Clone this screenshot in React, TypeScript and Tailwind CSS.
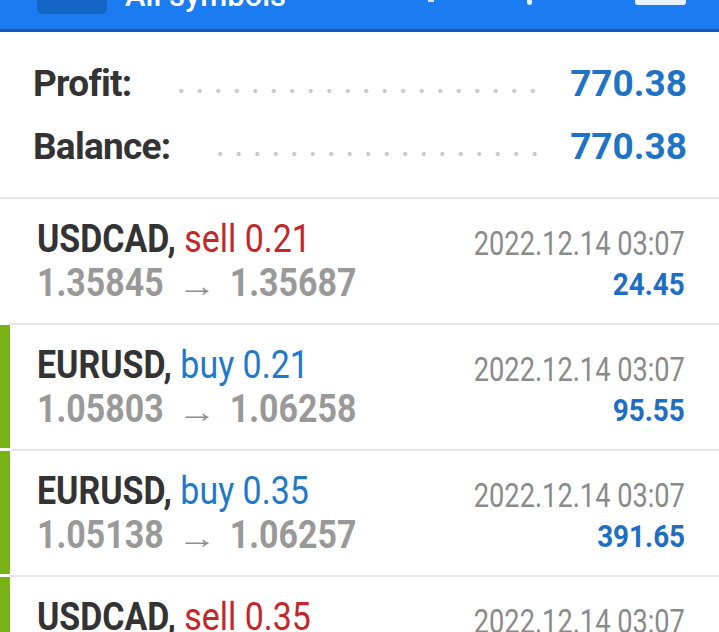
import React from 'react';

interface Deal {
  symbol: string;
  side: 'buy' | 'sell';
  lots: string;
  open: string;
  close: string;
  time: string;
  profit: string;
}

const deals: Deal[] = [
  { symbol: 'USDCAD', side: 'sell', lots: '0.21', open: '1.35845', close: '1.35687', time: '2022.12.14 03:07', profit: '24.45' },
  { symbol: 'EURUSD', side: 'buy', lots: '0.21', open: '1.05803', close: '1.06258', time: '2022.12.14 03:07', profit: '95.55' },
  { symbol: 'EURUSD', side: 'buy', lots: '0.35', open: '1.05138', close: '1.06257', time: '2022.12.14 03:07', profit: '391.65' },
  { symbol: 'USDCAD', side: 'sell', lots: '0.35', open: '1.35849', close: '1.35687', time: '2022.12.14 03:07', profit: '41.75' },
];

const font = { fontFamily: 'Roboto, "Noto Sans", sans-serif' };

const SummaryRow = ({ label, value }: { label: string; value: string }) => (
  <div className="flex items-center h-[63px]">
    <span className="text-[37px] font-bold text-[#333333] tracking-[-0.02em]">{label}</span>
    <div className="flex-1 ml-[40px] mr-[26px] mt-[14px] h-[6px] bg-[radial-gradient(circle,#c9c9c9_1.8px,transparent_2.3px)] bg-[length:18.5px_6px] bg-repeat-x" />
    <span className="text-[37px] font-bold text-[#1f73c6]">{value}</span>
  </div>
);

const DealRow = ({ deal, first }: { deal: Deal; first: boolean }) => (
  <div className="flex h-[126px]">
    <div className={`w-[10px] mb-[3px] ${first ? 'bg-white' : 'bg-[#78b215]'}`} />
    <div className="flex-1 flex justify-between border-b-2 border-[#e6e6e6] pl-[27px] pr-[34px] pt-[18px]">
      <div className="flex flex-col">
        <span className="inline-block origin-left scale-x-[0.87] whitespace-nowrap text-[39px] leading-[44px]">
          <span className="font-bold text-[#333333]">{deal.symbol},</span>{' '}
          <span className={deal.side === 'sell' ? 'text-[#c4262a]' : 'text-[#1f78c8]'}>
            {deal.side} {deal.lots}
          </span>
        </span>
        <span className="inline-block origin-left scale-x-[0.87] whitespace-nowrap text-[39px] leading-[44px] font-bold text-[#999999]">
          {deal.open}
          <span className="inline-block mx-[23px] scale-x-[1.5] text-[30px] font-normal text-[#8f8f8f]">→</span>
          {deal.close}
        </span>
      </div>
      <div className="flex flex-col items-end pt-[6px]">
        <span className="inline-block origin-right scale-x-[0.8] whitespace-nowrap text-[34px] leading-[40px] text-[#8a8a8a]">
          {deal.time}
        </span>
        <span className="inline-block origin-right scale-x-[0.87] text-[32px] leading-[42px] font-bold text-[#1c6fc4]">
          {deal.profit}
        </span>
      </div>
    </div>
  </div>
);

export default function App() {
  return (
    <div className="w-[719px] h-[632px] overflow-hidden bg-white" style={font}>
      <header className="relative h-[32px] bg-[#1a7cf0] border-b-[3px] border-[#1459bd] overflow-hidden">
        <div className="absolute left-[37px] top-[-12px] w-[70px] h-[26px] rounded-[5px] bg-[#1565c4]" />
        <span className="absolute left-[125px] top-[-24px] text-[31px] font-medium text-white leading-[40px]">All symbols</span>
        <div className="absolute left-[428px] top-0 w-[6px] h-[2px] bg-[#cfe4ff]" />
        <div className="absolute left-[527px] top-0 w-[5px] h-[5px] rounded-b-full bg-[#e6f1ff]" />
        <div className="absolute left-[635px] top-[-6px] w-[51px] h-[11px] rounded-[3px] bg-[#e8f3ff]" />
      </header>
      <section className="px-[33px] pr-[32px] pt-[20px] pb-[19px] border-b-2 border-[#e6e6e6]">
        <SummaryRow label="Profit:" value="770.38" />
        <SummaryRow label="Balance:" value="770.38" />
      </section>
      {deals.map((d, i) => (
        <DealRow key={i} deal={d} first={i === 0} />
      ))}
    </div>
  );
}
